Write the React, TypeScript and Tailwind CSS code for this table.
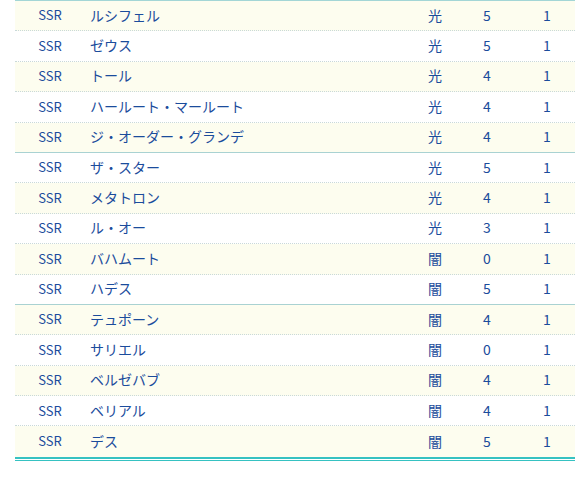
const rows: [string, string, number][] = [
  ['ルシフェル', '光', 5],
  ['ゼウス', '光', 5],
  ['トール', '光', 4],
  ['ハールート・マールート', '光', 4],
  ['ジ・オーダー・グランデ', '光', 4],
  ['ザ・スター', '光', 5],
  ['メタトロン', '光', 4],
  ['ル・オー', '光', 3],
  ['バハムート', '闇', 0],
  ['ハデス', '闇', 5],
  ['テュポーン', '闇', 4],
  ['サリエル', '闇', 0],
  ['ベルゼバブ', '闇', 4],
  ['ベリアル', '闇', 4],
  ['デス', '闇', 5],
];

export default function App() {
  return (
    <div
      className="w-[581px] h-[478px] bg-white pl-[15px] pr-[6px]"
      style={{ fontFamily: '"Noto Sans CJK JP", "Liberation Sans", sans-serif' }}
    >
      <div className="border-t border-[#a3d6d6] border-b-[4px] border-b-[#36c2c2] relative">
        {rows.map(([name, el, n], i) => {
          const last = i === rows.length - 1;
          const groupEnd = (i + 1) % 5 === 0;
          return (
            <div
              key={i}
              className={`flex items-center h-[30.4px] pb-[1px] text-[14px] text-[#1b4c9c] ${
                i % 2 === 0 ? 'bg-[#fdfdef]' : 'bg-white'
              } ${
                last
                  ? ''
                  : groupEnd
                    ? 'border-b border-[#a9d2d2]'
                    : 'border-b border-dotted border-[#c9d9d9]'
              }`}
            >
              <div className="w-[70px] text-center text-[13px]">SSR</div>
              <div className="flex-1 pl-[5px]">{name}</div>
              <div className="w-[50px] text-center pl-[2px]">{el}</div>
              <div className="w-[56px] text-center">{n}</div>
              <div className="w-[60px] text-center pl-[4px]">1</div>
            </div>
          );
        })}
        <div className="absolute left-0 right-0 bottom-[-3px] h-[1px] bg-white" />
      </div>
    </div>
  );
}
